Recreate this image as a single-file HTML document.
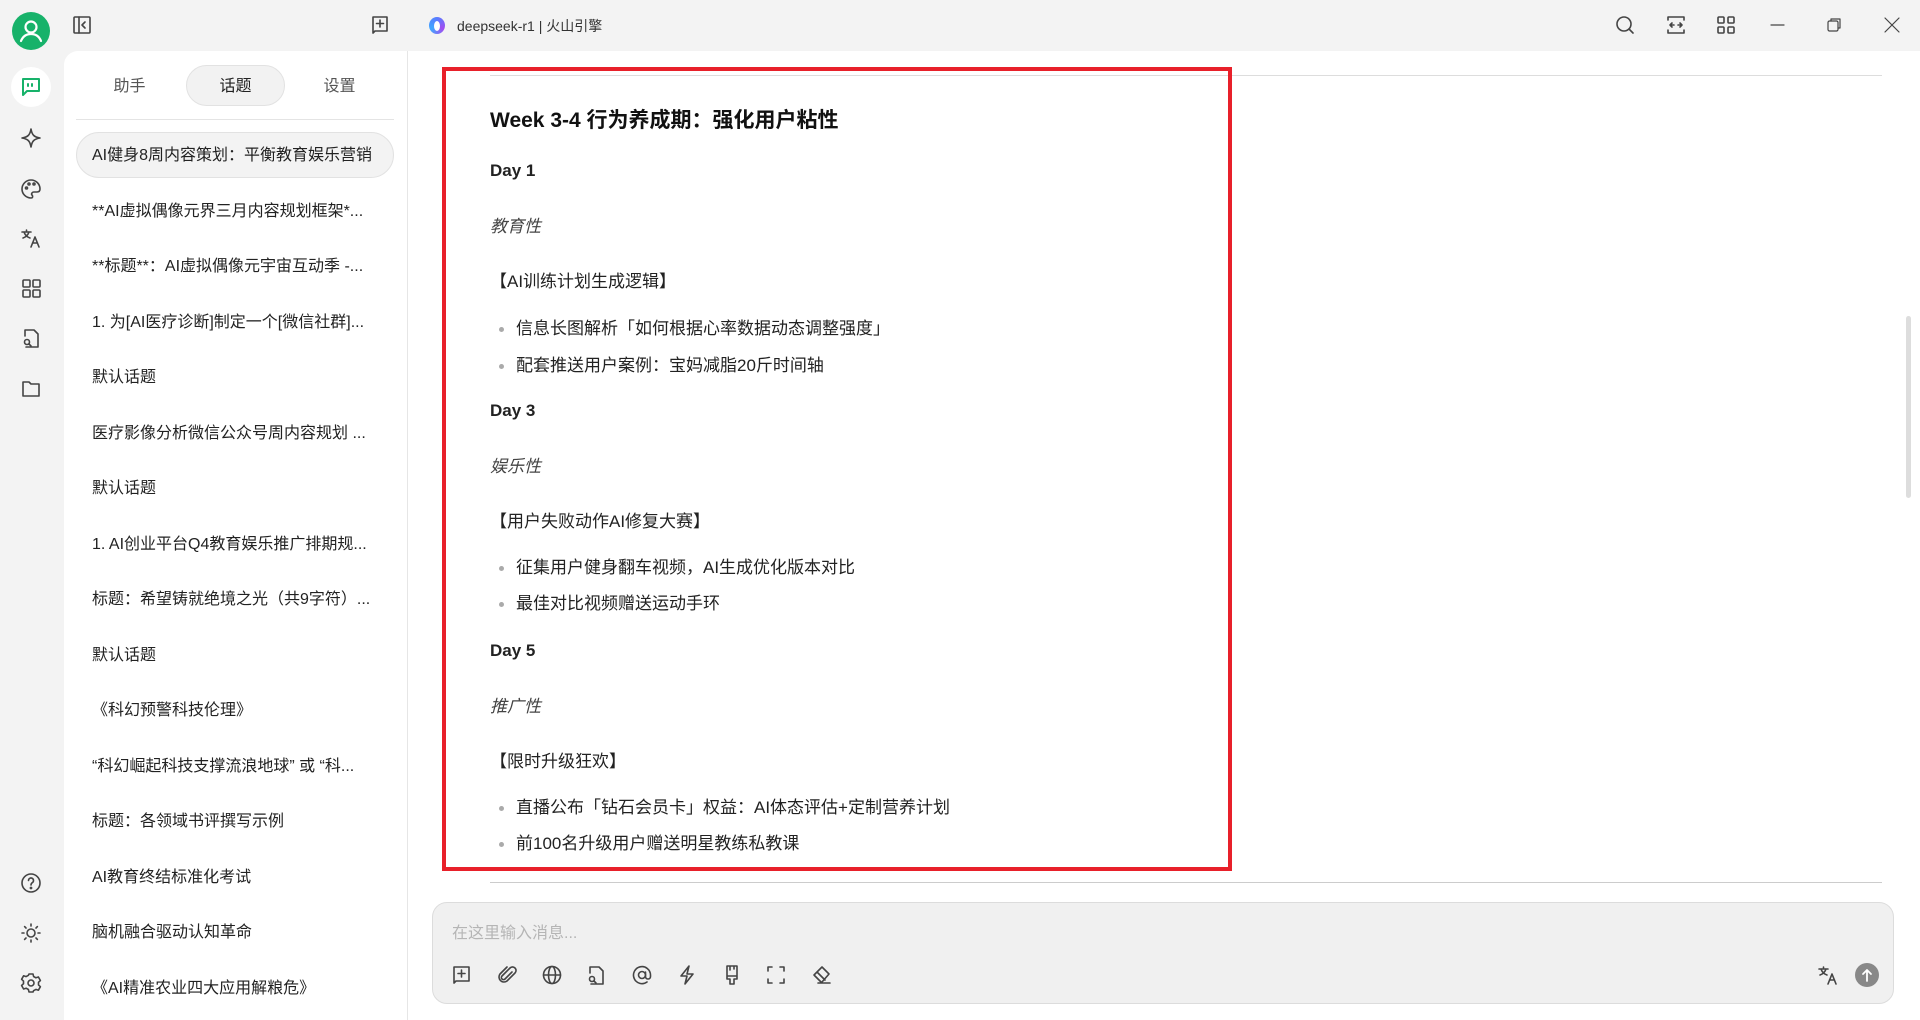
<!DOCTYPE html>
<html><head><meta charset="utf-8">
<style>
*{margin:0;padding:0;box-sizing:border-box}
body{width:1920px;height:1020px;overflow:hidden;background:#f3f3f3;font-family:"Liberation Sans","Noto Sans CJK SC",sans-serif;color:#222;position:relative}
.a{position:absolute}
svg.i{position:absolute;fill:none;stroke:#444;stroke-width:1.6;stroke-linecap:round;stroke-linejoin:round}
.side{left:64px;top:51px;width:344px;height:969px;background:#fff;border-top-left-radius:14px;border-right:1px solid #e6e6e6}
.main{left:408px;top:51px;width:1512px;height:969px;background:#fff}
.tab{top:65px;height:41px;line-height:41px;font-size:16px;color:#555;text-align:center;width:99px}
.item{left:92px;font-size:16px;color:#222;white-space:nowrap;line-height:20px}
.t{left:490px;font-size:17px;line-height:22px;color:#222;white-space:nowrap}
.b{font-weight:bold}
.it{font-style:italic;color:#444}
.dot{width:5px;height:5px;border-radius:50%;background:#aaa}
</style></head><body>
<div class="a" style="left:12px;top:12px;width:38px;height:38px;border-radius:50%;background:#17b26a"></div>
<svg class="i" style="left:12px;top:12px;stroke:#fff;stroke-width:2.2" width="38" height="38"><circle cx="19" cy="15" r="5.5"/><path d="M9 29c2-5 6-7 10-7s8 2 10 7"/></svg>
<svg class="i" style="left:72px;top:15px" width="20" height="20"><rect x="2" y="2" width="16" height="16" rx="1"/><path d="M7 2v16M13 7l-3 3 3 3"/></svg>
<svg class="i" style="left:370px;top:14px" width="20" height="22"><path d="M3 19V3h14v14H5z"/><path d="M10 6v7M6.5 9.5h7"/></svg>
<div class="a" style="left:429px;top:17px;width:16px;height:17px;border-radius:50%;background:conic-gradient(#5a7dff,#a24df0,#3fa8ff,#5a7dff)"></div>
<div class="a" style="left:434px;top:21px;width:6px;height:10px;border-radius:50%;background:#fff"></div>
<div class="a" style="left:457px;top:16px;font-size:14px;color:#333">deepseek-r1 | 火山引擎</div>
<svg class="i" style="left:1614px;top:14px" width="22" height="22"><circle cx="10" cy="10" r="7"/><path d="M15 15l4 4"/></svg>
<svg class="i" style="left:1665px;top:14px" width="22" height="22"><path d="M3 6V3h16v3M3 16v3h16v-3M5 11h4M13 11h4M7 9l-2 2 2 2M15 9l2 2-2 2"/></svg>
<svg class="i" style="left:1715px;top:14px" width="22" height="22"><rect x="3" y="3" width="6" height="6" rx="1"/><rect x="13" y="3" width="6" height="6" rx="1"/><rect x="3" y="13" width="6" height="6" rx="1"/><rect x="13" y="13" width="6" height="6" rx="1"/></svg>
<svg class="i" style="left:1767px;top:14px;stroke-width:1.2" width="22" height="22"><path d="M4 11h13"/></svg>
<svg class="i" style="left:1823px;top:14px;stroke-width:1.2" width="22" height="22"><rect x="5" y="7" width="10" height="10" rx="1.5"/><path d="M8 7V5h9v9h-2"/></svg>
<svg class="i" style="left:1881px;top:14px;stroke-width:1.2" width="22" height="22"><path d="M4 4l14 14M18 4L4 18"/></svg>
<div class="a" style="left:11px;top:67px;width:40px;height:40px;border-radius:50%;background:#fff"></div>
<svg class="i" style="left:20px;top:76px;stroke:#17b26a;stroke-width:2" width="22" height="22"><path d="M3 3h16v12H7l-4 4z"/><path d="M8 8v2M12 8v2"/></svg>
<svg class="i" style="left:20px;top:127px" width="22" height="22"><path d="M11 2c1 6 3 8 9 9-6 1-8 3-9 9-1-6-3-8-9-9 6-1 8-3 9-9z"/></svg>
<svg class="i" style="left:20px;top:178px" width="22" height="22"><path d="M11 2a9 9 0 100 18c2 0 2-2 1-3s0-3 2-3h3c2 0 3-1 3-3 0-5-4-9-9-9z"/><circle cx="6.5" cy="10" r="1"/><circle cx="9" cy="6" r="1"/><circle cx="14" cy="6" r="1"/></svg>
<svg class="i" style="left:20px;top:227px" width="22" height="22"><path d="M2 5h9M6.5 3v2M4 5c1 3 3 5 6 6M9 5c-1 3-3 5-6 6M11 20l4-10 4 10M12.5 16h5"/></svg>
<svg class="i" style="left:20px;top:277px" width="22" height="22"><rect x="3" y="3" width="7" height="7" rx="1"/><rect x="13" y="3" width="7" height="7" rx="1"/><rect x="3" y="13" width="7" height="7" rx="1"/><rect x="13" y="13" width="7" height="7" rx="1"/></svg>
<svg class="i" style="left:20px;top:327px" width="22" height="22"><path d="M5 9V3h9l4 4v13H6"/><circle cx="7" cy="15" r="2.5"/><path d="M9 17l2 2"/></svg>
<svg class="i" style="left:20px;top:377px" width="22" height="22"><path d="M3 5h6l2 2h8v12H3z"/></svg>
<svg class="i" style="left:20px;top:872px" width="22" height="22"><circle cx="11" cy="11" r="9"/><path d="M8.5 8.5a2.5 2.5 0 114 2c-1 .7-1.5 1.2-1.5 2.5"/><circle cx="11" cy="16" r=".6"/></svg>
<svg class="i" style="left:20px;top:922px" width="22" height="22"><circle cx="11" cy="11" r="4"/><path d="M11 2v2M11 18v2M2 11h2M18 11h2M4.6 4.6l1.4 1.4M16 16l1.4 1.4M4.6 17.4L6 16M16 6l1.4-1.4"/></svg>
<svg class="i" style="left:20px;top:972px" width="22" height="22"><circle cx="11" cy="11" r="3"/><path d="M9 2h4l.6 2.5 2.3 1.3 2.5-.8 2 3.5-1.900 1.8v2.6l1.9 1.8-2 3.5-2.5-.8-2.3 1.3L13 20H9l-.6-2.5-2.3-1.3-2.5.8-2-3.5 1.9-1.8V9.1L1.6 7.3l2-3.5 2.5.8 2.3-1.3z"/></svg>
<div class="a side"></div>
<div class="a tab" style="left:80px;top:66px">助手</div>
<div class="a tab" style="left:186px;background:#f2f2f2;border:1px solid #e2e2e2;border-radius:21px;color:#222">话题</div>
<div class="a tab" style="left:290px;top:66px">设置</div>
<div class="a" style="left:76px;top:119px;width:318px;height:1px;background:#e4e4e4"></div>
<div class="a" style="left:76px;top:132px;width:318px;height:46px;background:#f3f3f3;border:1px solid #e2e2e2;border-radius:23px"></div>
<div class="a item" style="top:146px">AI健身8周内容策划：平衡教育娱乐营销</div>
<div class="a item" style="top:202px">**AI虚拟偶像元界三月内容规划框架*...</div>
<div class="a item" style="top:257px">**标题**：AI虚拟偶像元宇宙互动季 -...</div>
<div class="a item" style="top:313px">1. 为[AI医疗诊断]制定一个[微信社群]...</div>
<div class="a item" style="top:368px">默认话题</div>
<div class="a item" style="top:424px">医疗影像分析微信公众号周内容规划 ...</div>
<div class="a item" style="top:479px">默认话题</div>
<div class="a item" style="top:535px">1. AI创业平台Q4教育娱乐推广排期规...</div>
<div class="a item" style="top:590px">标题：希望铸就绝境之光（共9字符）...</div>
<div class="a item" style="top:646px">默认话题</div>
<div class="a item" style="top:701px">《科幻预警科技伦理》</div>
<div class="a item" style="top:757px">“科幻崛起科技支撑流浪地球” 或 “科...</div>
<div class="a item" style="top:812px">标题：各领域书评撰写示例</div>
<div class="a item" style="top:868px">AI教育终结标准化考试</div>
<div class="a item" style="top:923px">脑机融合驱动认知革命</div>
<div class="a item" style="top:979px">《AI精准农业四大应用解粮危》</div>
<div class="a main"></div>
<div class="a" style="left:490px;top:75px;width:1392px;height:1px;background:#ddd"></div>
<div class="a" style="left:442px;top:67px;width:790px;height:804px;border:4px solid #e8202a"></div>
<div class="a t b" style="top:108px;font-size:21px;line-height:26px;color:#111">Week 3-4 行为养成期：强化用户粘性</div>
<div class="a t b" style="top:160px">Day 1</div>
<div class="a t it" style="top:216px">教育性</div>
<div class="a t" style="top:271px">【AI训练计划生成逻辑】</div>
<div class="a dot" style="left:499px;top:327px"></div><div class="a t" style="left:516px;top:318px">信息长图解析「如何根据心率数据动态调整强度」</div>
<div class="a dot" style="left:499px;top:364px"></div><div class="a t" style="left:516px;top:355px">配套推送用户案例：宝妈减脂20斤时间轴</div>
<div class="a t b" style="top:400px">Day 3</div>
<div class="a t it" style="top:456px">娱乐性</div>
<div class="a t" style="top:511px">【用户失败动作AI修复大赛】</div>
<div class="a dot" style="left:499px;top:566px"></div><div class="a t" style="left:516px;top:557px">征集用户健身翻车视频，AI生成优化版本对比</div>
<div class="a dot" style="left:499px;top:602px"></div><div class="a t" style="left:516px;top:593px">最佳对比视频赠送运动手环</div>
<div class="a t b" style="top:640px">Day 5</div>
<div class="a t it" style="top:696px">推广性</div>
<div class="a t" style="top:751px">【限时升级狂欢】</div>
<div class="a dot" style="left:499px;top:806px"></div><div class="a t" style="left:516px;top:797px">直播公布「钻石会员卡」权益：AI体态评估+定制营养计划</div>
<div class="a dot" style="left:499px;top:842px"></div><div class="a t" style="left:516px;top:833px">前100名升级用户赠送明星教练私教课</div>
<div class="a" style="left:490px;top:882px;width:1392px;height:1px;background:#ccc"></div>
<div class="a" style="left:1906px;top:316px;width:5px;height:182px;border-radius:3px;background:#ddd"></div>
<div class="a" style="left:432px;top:902px;width:1462px;height:102px;background:#f0f0f0;border:1px solid #dcdcdc;border-radius:15px"></div>
<div class="a" style="left:452px;top:919px;font-size:16px;color:#b5b5b5">在这里输入消息...</div>
<svg class="i" style="left:451px;top:964px" width="22" height="22"><path d="M3 19V3h15v14H5z"/><path d="M10.5 6v7M7 9.5h7"/></svg>
<svg class="i" style="left:496px;top:964px" width="22" height="22"><path d="M16 8l-7 7a2 2 0 01-3-3l8-8a3.5 3.5 0 015 5l-8 8a5 5 0 01-7-7l7-7"/></svg>
<svg class="i" style="left:541px;top:964px" width="22" height="22"><circle cx="11" cy="11" r="8.5"/><ellipse cx="11" cy="11" rx="3.5" ry="8.5"/><path d="M2.5 11h17"/></svg>
<svg class="i" style="left:585px;top:964px" width="22" height="22"><path d="M5 9V3h9l4 4v13H6"/><circle cx="7" cy="15" r="2.5"/><path d="M9 17l2 2"/></svg>
<svg class="i" style="left:631px;top:964px" width="22" height="22"><circle cx="11" cy="11" r="3.5"/><path d="M14.5 8v4.5a2.5 2.5 0 005 0V11a8.5 8.5 0 10-3.5 7"/></svg>
<svg class="i" style="left:676px;top:964px" width="22" height="22"><path d="M13 2L5 12h6l-2 8 8-10h-6z"/></svg>
<svg class="i" style="left:721px;top:964px" width="22" height="22"><path d="M6 2h10v10H6zM6 12h10v3h-3v5h-4v-5H6zM9 2v4M13 2v3"/></svg>
<svg class="i" style="left:765px;top:964px" width="22" height="22"><path d="M3 7V3h4M15 3h4v4M19 15v4h-4M7 19H3v-4"/></svg>
<svg class="i" style="left:811px;top:964px" width="22" height="22"><path d="M7 19h12M10 18l-7-7 8-8 7 7-7 8M6 8l8 8"/></svg>
<svg class="i" style="left:1817px;top:964px" width="22" height="22"><path d="M2 5h9M6.5 3v2M4 5c1 3 3 5 6 6M9 5c-1 3-3 5-6 6M11 20l4-10 4 10M12.5 16h5"/></svg>
<div class="a" style="left:1855px;top:963px;width:24px;height:24px;border-radius:50%;background:#888"></div>
<svg class="i" style="left:1855px;top:963px;stroke:#fff;stroke-width:1.8" width="24" height="24"><path d="M12 18V7M8 11l4-4 4 4"/></svg>
</body></html>
